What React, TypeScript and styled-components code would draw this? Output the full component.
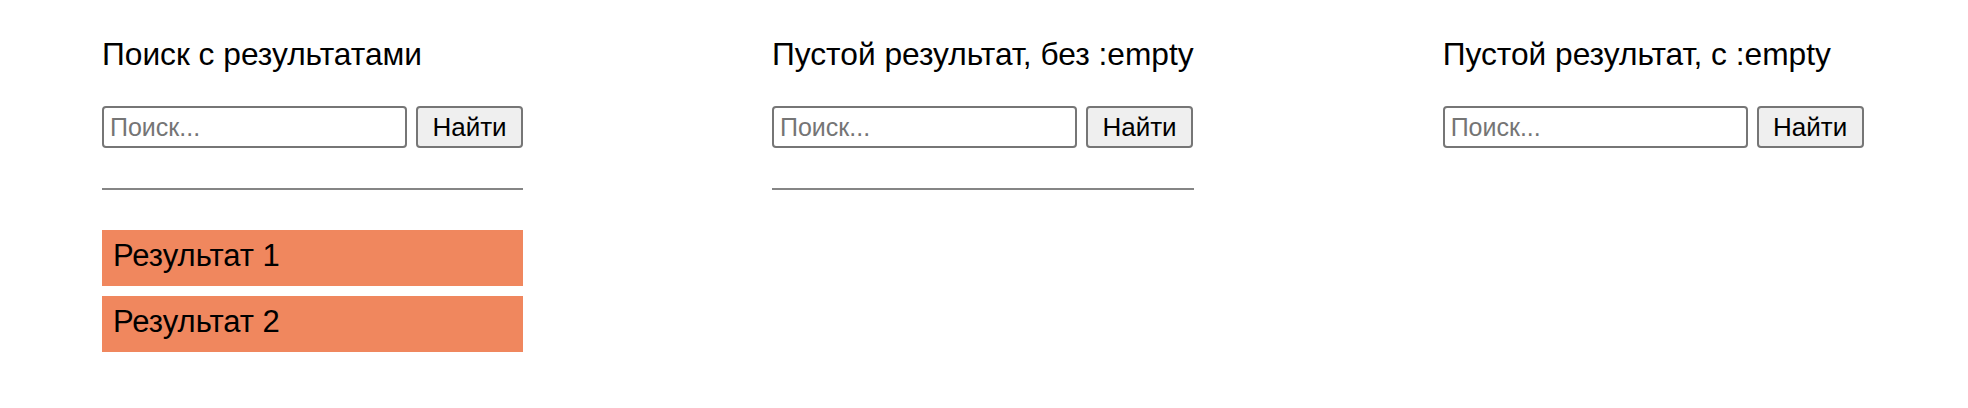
import React from "react";
import styled, { createGlobalStyle } from "styled-components";

const GlobalStyle = createGlobalStyle`
  html, body {
    margin: 0;
    padding: 0;
    background: #ffffff;
  }
  body {
    font-family: "Liberation Sans", Arial, sans-serif;
    color: #000000;
  }
`;

const Page = styled.div`
  display: flex;
  align-items: flex-start;
  gap: 249px;
  padding: 36px 0 0 102px;
`;

const Column = styled.section`
  display: flex;
  flex-direction: column;
  width: max-content;
`;

const Title = styled.h3`
  margin: 0 0 33px;
  font-size: 31.7px;
  font-weight: 400;
  line-height: 37px;
  white-space: nowrap;
`;

const SearchRow = styled.form`
  display: flex;
  gap: 9px;
  height: 42px;
  margin: 0;
`;

const SearchInput = styled.input`
  box-sizing: border-box;
  width: 305px;
  height: 42px;
  padding: 1px 6px;
  border: 2px solid #767676;
  border-radius: 4px;
  font-family: "Liberation Sans", Arial, sans-serif;
  font-size: 25px;
  color: #000;
  background: #fff;
  outline: none;
  &::placeholder {
    color: #757575;
  }
`;

const SearchButton = styled.button`
  box-sizing: border-box;
  width: 107px;
  height: 42px;
  padding: 0;
  border: 2px solid #767676;
  border-radius: 4px;
  background: #efefef;
  font-family: "Liberation Sans", Arial, sans-serif;
  font-size: 26px;
  color: #000;
  cursor: pointer;
`;

const Results = styled.div<{ $empty?: boolean }>`
  display: ${(p) => (p.$empty ? "none" : "flex")};
  flex-direction: column;
  gap: 10px;
  margin-top: 40px;
  padding-top: 40px;
  border-top: 2px solid #858585;
`;

const ResultItem = styled.div`
  box-sizing: border-box;
  height: 56px;
  padding: 8px 11px 0;
  background: #f0875e;
  font-size: 31px;
  line-height: normal;
`;

type Block = {
  title: string;
  results: string[];
  hideEmpty: boolean;
};

const blocks: Block[] = [
  { title: "Поиск с результатами", results: ["Результат 1", "Результат 2"], hideEmpty: false },
  { title: "Пустой результат, без :empty", results: [], hideEmpty: false },
  { title: "Пустой результат, с :empty", results: [], hideEmpty: true },
];

export default function App() {
  return (
    <>
      <GlobalStyle />
      <Page>
        {blocks.map((b) => (
          <Column key={b.title}>
            <Title>{b.title}</Title>
            <SearchRow onSubmit={(e) => e.preventDefault()}>
              <SearchInput type="search" placeholder="Поиск..." />
              <SearchButton type="submit">Найти</SearchButton>
            </SearchRow>
            <Results $empty={b.hideEmpty && b.results.length === 0}>
              {b.results.map((r) => (
                <ResultItem key={r}>{r}</ResultItem>
              ))}
            </Results>
          </Column>
        ))}
      </Page>
    </>
  );
}
